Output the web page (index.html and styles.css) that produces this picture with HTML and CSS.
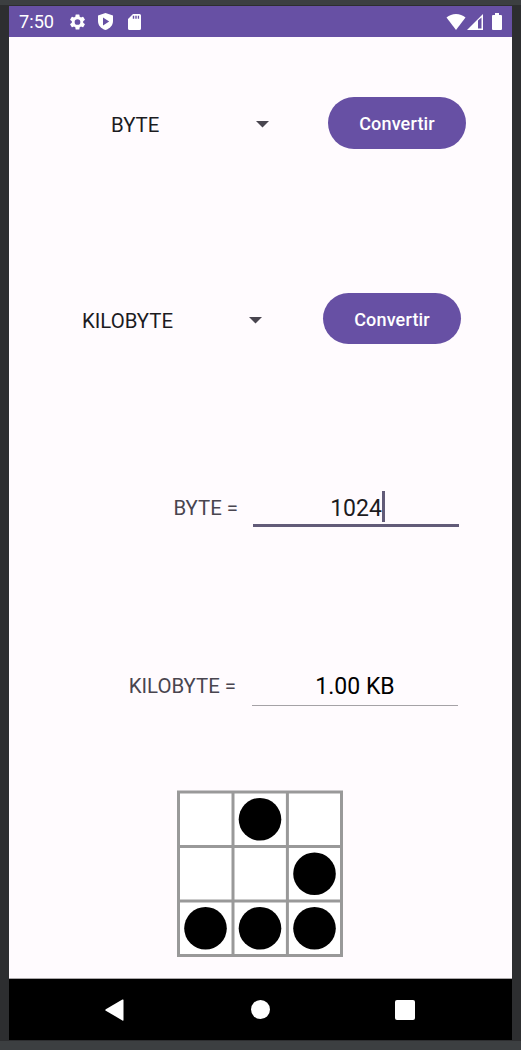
FILE: index.html
```html
<!DOCTYPE html>
<html lang="es">
<head>
<meta charset="utf-8">
<title>Convertidor</title>
<link rel="stylesheet" href="styles.css">
</head>
<body>
<div class="phone">
  <header class="status">
    <span class="clock">7:50</span>
    <svg class="gear" width="19" height="20" viewBox="0 0 24 24"><path d="M19.14 12.94c.04-.3.06-.61.06-.94 0-.32-.02-.64-.07-.94l2.03-1.58a.49.49 0 0 0 .12-.61l-1.92-3.32a.49.49 0 0 0-.59-.22l-2.39.96c-.5-.38-1.03-.7-1.62-.94l-.36-2.54a.48.48 0 0 0-.48-.41h-3.84a.47.47 0 0 0-.47.41l-.36 2.54c-.59.24-1.13.57-1.62.94l-2.39-.96a.48.48 0 0 0-.59.22L2.74 8.87a.47.47 0 0 0 .12.61l2.03 1.58c-.05.3-.09.63-.09.94s.02.64.07.94l-2.03 1.58a.49.49 0 0 0-.12.61l1.92 3.32c.12.22.37.29.59.22l2.39-.96c.5.38 1.03.7 1.62.94l.36 2.54c.05.24.24.41.48.41h3.84c.24 0 .44-.17.47-.41l.36-2.54c.59-.24 1.13-.56 1.62-.94l2.39.96c.22.08.47 0 .59-.22l1.92-3.32a.47.47 0 0 0-.12-.61l-2.01-1.58zM12 15.6a3.6 3.6 0 1 1 0-7.2 3.6 3.6 0 0 1 0 7.2z"/></svg>
    <svg class="shield" width="15" height="17" viewBox="0 0 15 17"><path fill-rule="evenodd" d="M7.500 0 15 2.600V8c0 4.400-3 7.600-7.500 9C3 15.600 0 12.400 0 8V2.600zM5 4.600v7.800L11.200 8.500z"/></svg>
    <svg class="card" width="13" height="16" viewBox="0 0 13 16"><path fill-rule="evenodd" d="M5 0h6.500A1.500 1.500 0 0 1 13 1.500v13a1.500 1.500 0 0 1-1.500 1.500h-10A1.500 1.500 0 0 1 0 14.500V5zM4.800 1.800v3h1.400v-3zm2.500 0v3h1.400v-3zm2.500 0v3h1.300v-3z"/></svg>
    <svg class="wifi" width="20" height="16" viewBox="0 0 20 16"><path d="M.5 3.500C3.200 1.200 6.400 0 10 0s6.800 1.200 9.500 3.500L10 16z"/></svg>
    <svg class="signal" width="16" height="16" viewBox="0 0 16 16"><path fill-rule="evenodd" d="M16 0v16H0zM11 6.500v8h3.500V3.600z"/></svg>
    <svg class="battery" width="10" height="17" viewBox="0 0 10 17"><path d="M3 0h4v2h2a1 1 0 0 1 1 1v13a1 1 0 0 1-1 1H1a1 1 0 0 1-1-1V3a1 1 0 0 1 1-1h2z"/></svg>
  </header>
  <main class="screen">
    <div class="picker picker-from">
      <span class="unit">BYTE</span>
      <svg class="caret" width="13" height="7" viewBox="0 0 13 7"><path d="M0 0h13L6.500 6.500z"/></svg>
      <button class="convert">Convertir</button>
    </div>
    <div class="picker picker-to">
      <span class="unit">KILOBYTE</span>
      <svg class="caret" width="13" height="7" viewBox="0 0 13 7"><path d="M0 0h13L6.500 6.500z"/></svg>
      <button class="convert">Convertir</button>
    </div>
    <div class="entry entry-from">
      <span class="label">BYTE =</span>
      <div class="field focused"><span class="value">1024</span><span class="cursor"></span></div>
    </div>
    <div class="entry entry-to">
      <span class="label">KILOBYTE =</span>
      <div class="field"><span class="value">1.00 KB</span></div>
    </div>
    <svg class="glider" width="168" height="168" viewBox="0 0 168 168">
      <path class="board" d="M2.500 2.500h163v163h-163z"/>
      <path class="lines" d="M2.500 2h163v163.500h-163zM57 2v163M111.400 2v163M2.500 56.500h163M2.500 111h163"/>
      <circle cx="84" cy="29.300" r="21.300"/><circle cx="138.500" cy="83.700" r="21.300"/>
      <circle cx="29.500" cy="138.300" r="21.300"/><circle cx="84" cy="138.300" r="21.300"/><circle cx="138.500" cy="138.300" r="21.300"/>
    </svg>
  </main>
  <nav class="navbar">
    <svg class="back" width="19" height="22" viewBox="0 0 19 22"><path d="M17.400.6Q18.500 0 18.500 1v20q0 1-1.100.4L.8 11.800Q-.3 11 .8 10.200z"/></svg>
    <span class="home"></span>
    <span class="recents"></span>
  </nav>
</div>
</body>
</html>
```
FILE: styles.css
```css
* { box-sizing: border-box; }

body {
  margin: 0;
  height: 1050px;
  overflow: hidden;
  background: #2d2e30;
  border-top: 5px solid #3c3f41;
  border-bottom: 9px solid #3c3f41;
  font-family: Roboto, "Liberation Sans", sans-serif;
}

.phone {
  display: flex;
  flex-direction: column;
  width: 503px;
  height: 1034px;
  margin: 1px 0 0 9px;
}

.status {
  display: flex;
  align-items: center;
  height: 31px;
  padding: 0 10px;
  background: #6750a4;
  color: #fff;
  fill: #fff;
}

.clock { width: 49px; font-size: 18.200px; line-height: 31px; }
.shield { margin-left: 11px; }
.card { margin-left: 15px; }
.wifi { margin-left: auto; }
.signal { margin-left: 1px; }
.battery { margin-left: 9px; }

.screen {
  display: flex;
  flex-direction: column;
  height: 942px;
  background: #fffbfe;
  border-bottom: 1px solid #aaa7a9;
}

.picker { display: flex; align-items: center; height: 51px; }
.picker-from { margin-top: 60px; padding-left: 102px; }
.picker-to { margin-top: 145px; padding-left: 73px; }

.unit { color: #1c1b1f; font-size: 20.400px; line-height: 24px; padding-top: 4px; }
.picker-from .unit { width: 145px; }
.picker-to .unit { width: 167px; }
.caret { fill: #49454f; margin-top: 4px; }

.convert {
  width: 138px;
  height: 51px;
  padding: 2px 0 0;
  border: 0;
  border-radius: 26px;
  background: #6750a4;
  color: #fff;
  font: 500 18px Roboto, "Liberation Sans", sans-serif;
  letter-spacing: .17px;
}
.picker-from .convert { height: 52px; margin-left: 59px; }
.picker-to .convert { margin-left: 61px; }

.entry { display: flex; justify-content: flex-end; }
.entry-from { margin-top: 145px; padding-right: 53px; }
.entry-to { margin-top: 141px; padding-right: 54px; }

.label { color: #49454f; font-size: 20.400px; line-height: 38px; margin-right: 16px; }
.entry-from .label { margin-right: 15px; }
.entry-to .label { line-height: 36px; }

.field {
  display: flex;
  justify-content: center;
  align-items: center;
  width: 206px;
  height: 38px;
  border-bottom: 1px solid #a5a2a6;
  color: #000;
  font-size: 23px;
}
.focused { padding-left: 3px; border-bottom: 3px solid #625b78; color: #1c1b1f; }
.focused .value { padding-top: 3px; }
.cursor { width: 3px; height: 31px; background: #625b78; }

.glider { margin: 84px 0 0 167px; }
.board { fill: #fff; }
.lines { fill: none; stroke: #999; stroke-width: 3; }

.navbar {
  display: flex;
  align-items: center;
  height: 61px;
  padding-left: 96px;
  background: #000;
  fill: #fff;
}
.home { width: 19px; height: 19px; margin-left: 127px; border-radius: 50%; background: #fff; }
.recents { width: 20px; height: 20px; margin-left: 125px; border-radius: 2px; background: #fff; }
```
